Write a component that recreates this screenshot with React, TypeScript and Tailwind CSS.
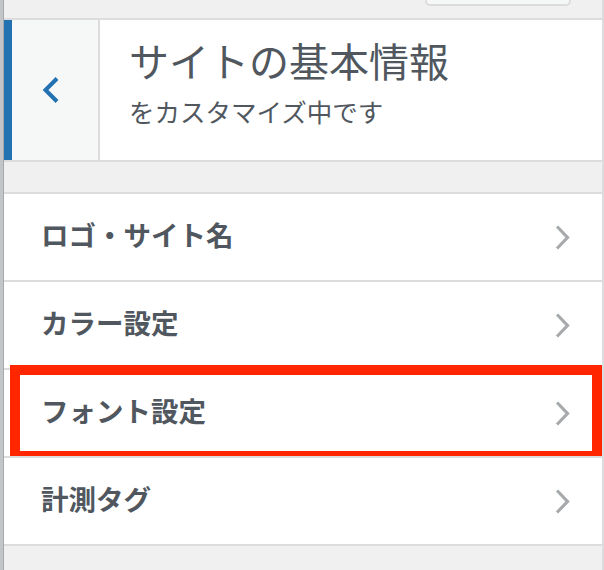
import React from "react";

const font = { fontFamily: '"Noto Sans CJK JP", "Noto Sans", sans-serif' };

function ChevronRight() {
  return (
    <svg width="16" height="27" viewBox="0 0 16 27" className="shrink-0">
      <polyline points="3,2.5 13.5,13.5 3,24.5" fill="none" stroke="#a7aaad" strokeWidth="3.2" />
    </svg>
  );
}

function Row({ label, highlight }: { label: string; highlight?: boolean }) {
  return (
    <div className="relative flex h-[88px] items-center justify-between border-t-2 border-[#dcdcde] bg-white pl-[37px] pr-[32px]">
      <span className="mb-[4px] text-[27.5px] font-bold leading-none text-[#50575e]">{label}</span>
      <ChevronRight />
      {highlight && (
        <div className="pointer-events-none absolute top-[-5px] bottom-[-5px] left-[6px] right-0 border-[10px] border-[#ff2600]" />
      )}
    </div>
  );
}

export default function App() {
  return (
    <div className="flex h-[570px] w-[604px] overflow-hidden bg-[#f0f0f1]" style={font}>
      <div className="w-[4px] shrink-0 border-r border-[#a7aaad] bg-[#c3c4c7]" />
      <div className="flex flex-1 flex-col">
        <div className="h-[18px] bg-[#f0f0f1] pl-[421px]">
          <div className="h-[6px] w-[146px] rounded-b-[5px] border-x-2 border-b-2 border-[#dcdcde] bg-[#f6f7f7]" />
        </div>
        <div className="flex h-[144px] border-y-2 border-[#dcdcde] bg-white">
          <div className="flex w-[96px] items-center border-l-8 border-r-2 border-l-[#2271b1] border-r-[#dcdcde] bg-[#f6f7f7] pl-[30px]">
            <svg width="18" height="28" viewBox="0 0 18 28">
              <polyline points="15,2.5 3.5,14 15,25.5" fill="none" stroke="#2271b1" strokeWidth="4" />
            </svg>
          </div>
          <div className="flex flex-col pl-[29px] pt-[17px] text-[#50575e]">
            <div className="text-[40px] leading-[46px]">サイトの基本情報</div>
            <div className="mt-[13px] text-[25.5px] leading-[30px]">をカスタマイズ中です</div>
          </div>
        </div>
        <div className="h-[30px] bg-[#f0f0f1]" />
        <Row label="ロゴ・サイト名" />
        <Row label="カラー設定" />
        <Row label="フォント設定" highlight />
        <Row label="計測タグ" />
        <div className="flex-1 border-t-2 border-[#dcdcde] bg-[#f0f0f1]" />
      </div>
      <div className="w-[2px] shrink-0 bg-[#dcdcde]" />
    </div>
  );
}
